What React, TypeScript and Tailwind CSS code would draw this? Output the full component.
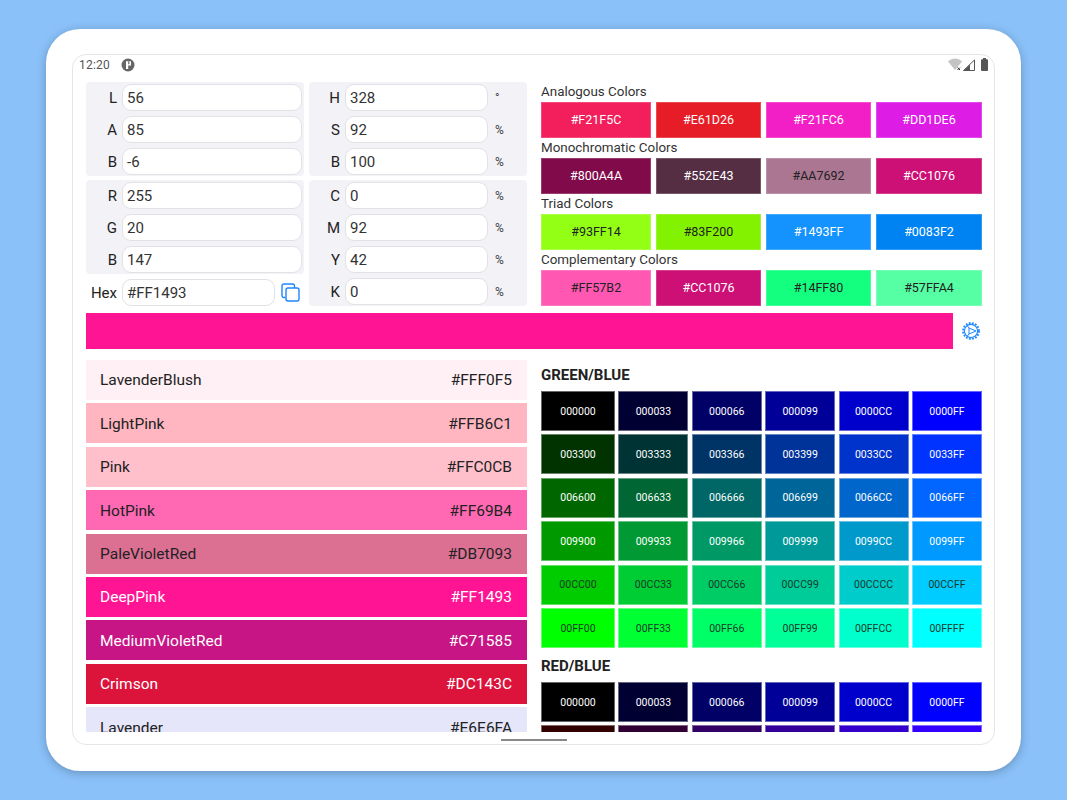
import React from 'react';

const harmonies = [
  { title: 'Analogous Colors', colors: ['#F21F5C', '#E61D26', '#F21FC6', '#DD1DE6'], dark: [] as string[] },
  { title: 'Monochromatic Colors', colors: ['#800A4A', '#552E43', '#AA7692', '#CC1076'], dark: ['#AA7692'] },
  { title: 'Triad Colors', colors: ['#93FF14', '#83F200', '#1493FF', '#0083F2'], dark: ['#93FF14', '#83F200'] },
  { title: 'Complementary Colors', colors: ['#FF57B2', '#CC1076', '#14FF80', '#57FFA4'], dark: ['#FF57B2', '#14FF80', '#57FFA4'] },
];

const named = [
  { name: 'LavenderBlush', hex: '#FFF0F5', light: false },
  { name: 'LightPink', hex: '#FFB6C1', light: false },
  { name: 'Pink', hex: '#FFC0CB', light: false },
  { name: 'HotPink', hex: '#FF69B4', light: false },
  { name: 'PaleVioletRed', hex: '#DB7093', light: false },
  { name: 'DeepPink', hex: '#FF1493', light: true },
  { name: 'MediumVioletRed', hex: '#C71585', light: true },
  { name: 'Crimson', hex: '#DC143C', light: true },
  { name: 'Lavender', hex: '#E6E6FA', light: false },
];

const steps = ['00', '33', '66', '99', 'CC', 'FF'];

function Field({ label, value, unit }: { label: string; value: string; unit?: string }) {
  return (
    <div className="flex items-center h-[26px]">
      <span className="w-[31px] pt-[2px] text-right text-[15px] text-[#222]">{label}</span>
      <div className={`${unit ? 'w-[143px]' : 'w-[180px]'} ml-[5px] h-[27px] bg-white border border-[#e2e2e4] rounded-[9px] pl-[4px] pt-[2px] flex items-center text-[15px] text-[#333]`}>
        {value}
      </div>
      {unit && <span className="ml-[7px] pt-[1px] text-[12px] text-[#444]">{unit}</span>}
    </div>
  );
}

function FieldBox({ children }: { children: React.ReactNode }) {
  return <div className="bg-[#f2f2f7] rounded-[4px] w-[218px] py-[2px] flex flex-col gap-[6px]">{children}</div>;
}

function ColorGrid({ codes, darkText }: { codes: string[]; darkText?: (code: string) => boolean }) {
  return (
    <div className="grid grid-cols-[74px_70px_70px_70px_70px_70px] gap-x-[3.4px] gap-y-[3.4px]">
      {codes.map((code) => (
        <div
          key={code}
          className={`h-10 pt-[1px] flex items-center justify-center border border-white/40 text-[10.5px] ${darkText && darkText(code) ? 'text-[#1a3a2a]' : 'text-white'}`}
          style={{ backgroundColor: `#${code}` }}
        >
          {code}
        </div>
      ))}
    </div>
  );
}

const greenBlue = steps.flatMap((g) => steps.map((b) => '00' + g + b));
const redBlue = ['00', '33'].flatMap((r) => steps.map((b) => r + '00' + b));

export default function App() {
  return (
    <div className="w-[1067px] h-[800px] bg-[#8ac1f9] flex items-center justify-center font-['Roboto',sans-serif] overflow-hidden">
      <div className="w-[975px] h-[742px] bg-white rounded-[34px] shadow-[0_2px_10px_rgba(0,0,0,0.25)] pt-[25px] pl-[26px]">
        <div className="w-[923px] h-[691px] border border-[#e6e6e6] rounded-[14px] flex flex-col overflow-hidden">
          {/* status bar */}
          <div className="h-[27px] shrink-0 flex items-center pl-[6px] pr-[6px] pb-[8px]">
            <span className="text-[12px] text-[#555] tracking-[0.2px]">12:20</span>
            <svg className="ml-[11px]" width="14" height="14" viewBox="0 0 14 14">
              <circle cx="7" cy="7" r="6.5" fill="#666" />
              <path d="M5 3.2h5v4.2H7.2V11H5z" fill="#fff" />
              <path d="M7.2 3.2h1.2v3H7.2z" fill="#666" />
            </svg>
            <div className="ml-auto flex items-center">
              <svg width="14" height="13" viewBox="0 0 14 13">
                <path d="M0 3.5C4-.5 10-.5 14 3.5L7 12z" fill="#c4c4c4" />
                <path d="M9.5 9.5l2.5 2.5M12 9.5L9.5 12" stroke="#333" strokeWidth="1" />
              </svg>
              <svg className="ml-[1px]" width="12" height="12" viewBox="0 0 12 12">
                <path d="M11.5 1v10.5H.5z" fill="none" stroke="#555" strokeWidth="1" />
                <path d="M7 5.5v6H1z" fill="#555" />
              </svg>
              <svg className="ml-[6px]" width="7" height="13" viewBox="0 0 7 13">
                <path d="M2 0h3v1.2h1a1 1 0 0 1 1 1V12a1 1 0 0 1-1 1H1a1 1 0 0 1-1-1V2.2a1 1 0 0 1 1-1h1z" fill="#555" />
              </svg>
            </div>
          </div>

          <div className="pl-[13px] flex-1 flex flex-col">
            {/* top section */}
            <div className="flex gap-[14px] h-[224px]">
              <div className="w-[441px] flex gap-[5px]">
                <div className="flex flex-col gap-[4px]">
                  <FieldBox>
                    <Field label="L" value="56" />
                    <Field label="A" value="85" />
                    <Field label="B" value="-6" />
                  </FieldBox>
                  <FieldBox>
                    <Field label="R" value="255" />
                    <Field label="G" value="20" />
                    <Field label="B" value="147" />
                  </FieldBox>
                  <div className="flex items-center h-[28px] mt-[1px]">
                    <span className="w-[31px] pt-[1px] text-right text-[15px] text-[#222]">Hex</span>
                    <div className="ml-[5px] w-[153px] h-[27px] bg-white border border-[#e2e2e4] rounded-[9px] pl-[4px] pt-[1px] flex items-center text-[15px] text-[#333]">
                      #FF1493
                    </div>
                    <svg className="ml-[6px]" width="19" height="19" viewBox="0 0 19 19" fill="none" stroke="#1e86ff" strokeWidth="1.4">
                      <path d="M4.5 14.5H3a2 2 0 0 1-2-2V3a2 2 0 0 1 2-2h8.5a2 2 0 0 1 2 2v2" />
                      <rect x="5" y="5" width="13" height="13" rx="2" />
                    </svg>
                  </div>
                </div>
                <div className="flex flex-col gap-[4px]">
                  <FieldBox>
                    <Field label="H" value="328" unit="°" />
                    <Field label="S" value="92" unit="%" />
                    <Field label="B" value="100" unit="%" />
                  </FieldBox>
                  <FieldBox>
                    <Field label="C" value="0" unit="%" />
                    <Field label="M" value="92" unit="%" />
                    <Field label="Y" value="42" unit="%" />
                    <Field label="K" value="0" unit="%" />
                  </FieldBox>
                </div>
              </div>

              <div className="w-[441px] flex flex-col">
                {harmonies.map((h) => (
                  <div key={h.title}>
                    <div className="h-[20px] flex items-center text-[13.4px] text-[#333]">{h.title}</div>
                    <div className="grid grid-cols-[110px_105px_105px_106px] gap-x-[5px]">
                      {h.colors.map((c) => (
                        <div
                          key={c}
                          className={`h-[36px] flex items-center justify-center border border-white/20 text-[12.5px] ${h.dark.includes(c) ? 'text-[#222]' : 'text-white'}`}
                          style={{ backgroundColor: c }}
                        >
                          {c}
                        </div>
                      ))}
                    </div>
                  </div>
                ))}
              </div>
            </div>

            {/* current colour bar */}
            <div className="flex items-center mt-[7px]">
              <div className="w-[867px] h-[36px] bg-[#FF1493]" />
              <svg className="ml-[9px]" width="18" height="18" viewBox="0 0 18 18" fill="none" stroke="#1e86ff">
                <circle cx="9" cy="9" r="8" strokeWidth="1.8" strokeDasharray="1.8 1.4" />
                <circle cx="9" cy="9" r="6.6" strokeWidth="1.1" />
                <path d="M7 6l7 3-7 3zM7 6L5 3.5M7 12l-2 2.5" strokeWidth="1" />
              </svg>
            </div>

            {/* lower section */}
            <div className="flex gap-[14px] mt-[11px] h-[372px] overflow-hidden">
              <div className="w-[441px] flex flex-col gap-[3.4px]">
                {named.map((n) => (
                  <div
                    key={n.name}
                    className={`h-10 shrink-0 flex items-center justify-between pl-[14px] pr-[15px] pt-[2px] text-[15.5px] ${n.light ? 'text-white' : 'text-[#222]'}`}
                    style={{ backgroundColor: n.hex }}
                  >
                    <span>{n.name}</span>
                    <span>{n.hex}</span>
                  </div>
                ))}
              </div>
              <div className="w-[441px]">
                <div className="h-[31px] flex items-center text-[15px] font-bold text-[#222]">GREEN/BLUE</div>
                <ColorGrid codes={greenBlue} darkText={(code) => code[2] === 'C' || code[2] === 'F'} />
                <div className="h-[31px] mt-[3px] flex items-center text-[15px] font-bold text-[#222]">RED/BLUE</div>
                <ColorGrid codes={redBlue} />
              </div>
            </div>
          </div>

          {/* nav handle */}
          <div className="h-[13px] shrink-0 flex items-start justify-center pt-[7px]">
            <div className="w-[66px] h-[2px] bg-[#888]" />
          </div>
        </div>
      </div>
    </div>
  );
}
